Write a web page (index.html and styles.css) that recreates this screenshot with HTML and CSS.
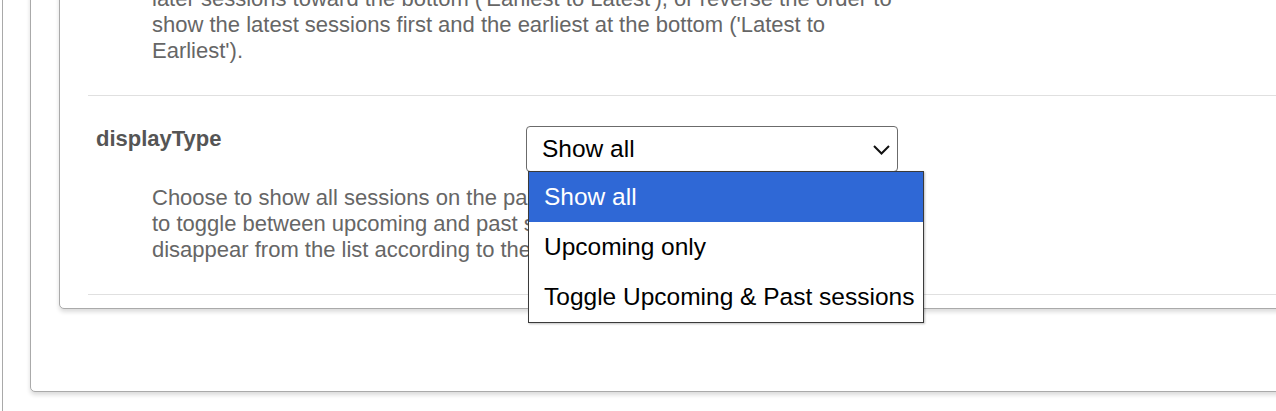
FILE: index.html
```html
<!DOCTYPE html>
<html lang="en">
<head>
<meta charset="utf-8">
<title>Settings</title>
<link rel="stylesheet" href="styles.css">
</head>
<body>
<div class="page">
  <div class="outer-card">
    <div class="inner-card">
      <div class="setting-row">
        <div class="setting-head">
          <div class="setting-name">sortOrder</div>
          <div class="select-wrap">
            <div class="select-box">
              <span>Earliest to Latest</span>
              <svg class="chevron" width="17" height="10" viewBox="0 0 17 10"><path d="M1 1 L8.5 8.5 L16 1" fill="none" stroke="#111" stroke-width="2"/></svg>
            </div>
          </div>
        </div>
        <p class="setting-desc">Choose to list sessions in chronological order, with the earliest at the top and<br>later sessions toward the bottom ('Earliest to Latest'), or reverse the order to<br>show the latest sessions first and the earliest at the bottom ('Latest to<br>Earliest').</p>
      </div>
      <div class="setting-row">
        <div class="setting-head">
          <div class="setting-name">displayType</div>
          <div class="select-wrap">
            <div class="select-box">
              <span>Show all</span>
              <svg class="chevron" width="17" height="10" viewBox="0 0 17 10"><path d="M1 1 L8.5 8.5 L16 1" fill="none" stroke="#111" stroke-width="2"/></svg>
            </div>
            <ul class="dropdown">
              <li class="option selected">Show all</li>
              <li class="option">Upcoming only</li>
              <li class="option">Toggle Upcoming &amp; Past sessions</li>
            </ul>
          </div>
        </div>
        <p class="setting-desc">Choose to show all sessions on the page, only upcoming ones, or<br>to toggle between upcoming and past sessions. Past sessions<br>disappear from the list according to their end date.</p>
      </div>
    </div>
  </div>
</div>
</body>
</html>
```

FILE: styles.css
```css
html, body {
  margin: 0;
  padding: 0;
  overflow: hidden;
  background: #fff;
  font-family: "Liberation Sans", Arial, sans-serif;
}

.page {
  margin-left: 2px;
  width: 1400px;
  height: 411px;
  border-left: 1px solid #a9a9a9;
  padding-left: 27px;
  overflow: hidden;
}

.outer-card {
  margin-top: -159px;
  border: 1px solid #aaa;
  border-radius: 5px;
  box-shadow: 0 3px 4px rgba(0, 0, 0, 0.14);
  padding: 28px 0 82px 28px;
  background: #fff;
}

.inner-card {
  border: 1px solid #aaa;
  border-radius: 5px;
  box-shadow: 0 3px 4px rgba(0, 0, 0, 0.14);
  padding: 0 0 13px 28px;
  background: #fff;
}

.setting-row {
  padding: 30px 0 31px 8px;
  border-bottom: 1px solid #e0e0e0;
}

.setting-head {
  display: grid;
  grid-template-columns: 430px 372px;
  align-items: start;
}

.setting-name {
  font-size: 22px;
  font-weight: bold;
  line-height: 26px;
  color: #555;
}

.select-wrap {
  position: relative;
}

.select-box {
  box-sizing: border-box;
  height: 46px;
  border: 1px solid #6b6b6b;
  border-radius: 4px;
  display: flex;
  align-items: center;
  justify-content: space-between;
  padding: 0 7px 0 15px;
  font-size: 24.5px;
  color: #000;
  background: #fff;
}

.chevron {
  display: block;
  margin-top: 2px;
}

.setting-desc {
  margin: 13px 0 0 56px;
  font-size: 22px;
  line-height: 26px;
  color: #666;
}

.dropdown {
  position: absolute;
  left: 2px;
  top: 45px;
  width: 396px;
  box-sizing: border-box;
  margin: 0;
  padding: 0;
  list-style: none;
  border: 1px solid #3a3a3a;
  background: #fff;
  box-shadow: 1px 1px 2px rgba(0, 0, 0, 0.25);
  z-index: 5;
}

.option {
  height: 50px;
  display: flex;
  align-items: center;
  padding-left: 15px;
  font-size: 24.5px;
  color: #000;
  white-space: nowrap;
}

.option.selected {
  background: #2f68d6;
  color: #fff;
}
```
